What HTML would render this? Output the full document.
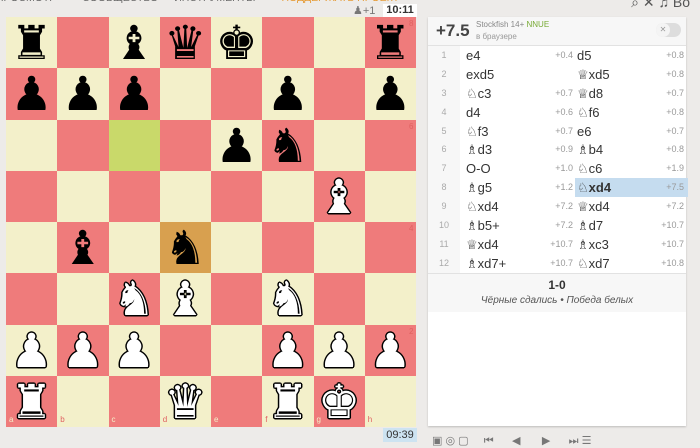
<!DOCTYPE html>
<html><head><meta charset="utf-8"><style>
body{margin:0;width:700px;height:442px;background:#edebe9;font-family:"Liberation Sans","DejaVu Sans",sans-serif;overflow:hidden;position:relative}
.nav{position:absolute;top:-8px;left:-4px;font-size:10.5px;color:#6b6b6b;white-space:nowrap}
.nav span{margin-right:16px}
#board{position:absolute;left:6px;top:17px;width:410px;height:410px}
.sq{position:absolute;width:51.25px;height:51.25px;text-align:center;font-family:"DejaVu Sans",sans-serif;font-size:47px;line-height:54px;color:#000}
.l{background:#f3f0ca}.d{background:#ef7b7b}
.g{background:#c9d96a}.o{background:#d8a04f}
.w{color:#fff;text-shadow:1.5px 0 #000,-1.5px 0 #000,0 1.5px #000,0 -1.5px #000,1px 1px #000,-1px -1px #000,1px -1px #000,-1px 1px #000}
.co{position:absolute;font-size:8px;color:#c44;line-height:8px}
.panel{position:absolute;left:428px;top:17px;width:258px;height:409px;background:#fff;box-shadow:0 1px 2px rgba(0,0,0,.2)}
.hdr{height:28px;background:#f7f7f7;border-bottom:1px solid #e2e2e2;position:relative}
.row{height:18.9px;position:relative;font-size:13px;line-height:19px;color:#333}
.row .n{position:absolute;left:0;width:32px;height:100%;background:#f7f7f7;color:#aaa;font-size:9px;text-align:center}
.mv{position:absolute;top:0;height:100%}
.e{position:absolute;font-size:9px;color:#999;text-align:right}
</style></head><body>
<div class="nav"><span>ПРОСМОТР</span><span style="margin-left:10px">СООБЩЕСТВО</span><span>ИНСТРУМЕНТЫ</span><span style="color:#e69d3a;margin-left:10px">ПОДДЕРЖАТЬ ПРОЕКТ</span></div>
<div style="position:absolute;right:10px;top:-6px;font-size:14px;color:#555">⌕ ✕ ♫ Bo</div>
<div style="position:absolute;left:353px;top:4px;font-size:11px;color:#777">♟+1</div>
<div style="position:absolute;left:383px;top:4px;width:34px;height:13px;background:#fff;font-size:11px;font-weight:bold;text-align:center;line-height:13px;color:#333">10:11</div>
<div id="board"></div>
<div style="position:absolute;left:383px;top:428px;width:34px;height:14px;background:#cde3f1;font-size:11px;text-align:center;line-height:14px;color:#333">09:39</div>
<div class="panel">
<div class="hdr"><span style="position:absolute;left:8px;top:4px;font-size:17px;font-weight:bold;color:#444">+7.5</span>
<span style="position:absolute;left:48px;top:3px;font-size:8px;color:#888">Stockfish 14+ <span style="color:#7a3">NNUE</span></span>
<span style="position:absolute;left:48px;top:15px;font-size:8px;color:#999">в браузере</span>
<span style="position:absolute;left:228px;top:6px;width:25px;height:14px;border-radius:8px;background:#ddd"><span style="position:absolute;left:0;top:0;width:14px;height:14px;border-radius:7px;background:#f4f4f4;font-size:8px;text-align:center;line-height:14px;color:#999">✕</span></span></div>
<div id="moves"></div>
<div style="position:absolute;top:256px;left:0;width:258px;height:38px;background:#f7f7f7;border-top:1px solid #e2e2e2;text-align:center">
<div style="font-size:12px;font-weight:bold;color:#333;margin-top:4px">1-0</div>
<div style="font-size:10px;font-style:italic;color:#555;margin-top:3px">Чёрные сдались • Победа белых</div></div>
</div>
<div style="position:absolute;left:432px;top:434px;font-size:11px;color:#777">▣ ◎ ▢ &nbsp;&nbsp;&nbsp; ⏮ &nbsp;&nbsp;&nbsp;&nbsp; ◀ &nbsp;&nbsp;&nbsp;&nbsp;&nbsp; ▶ &nbsp;&nbsp;&nbsp;&nbsp; ⏭ ☰</div>
<script>
var pcs={"a8":"r","c8":"b","d8":"q","e8":"k","h8":"r","a7":"p","b7":"p","c7":"p","f7":"p","h7":"p","e6":"p","f6":"n","g5":"B","b4":"b","d4":"n","c3":"N","d3":"B","f3":"N","a2":"P","b2":"P","c2":"P","f2":"P","g2":"P","h2":"P","a1":"R","d1":"Q","f1":"R","g1":"K"};
var G={k:"♚",q:"♛",r:"♜",b:"♝",n:"♞",p:"♟"};
var b=document.getElementById('board'),h='',f='abcdefgh',s=51.25;
for(var r=0;r<8;r++)for(var c=0;c<8;c++){var k=f[c]+(8-r),cl=(r+c)%2?'d':'l';if(k=='c6')cl='g';if(k=='d4')cl='o';
var p=pcs[k],t='';if(p){var w=p==p.toUpperCase();t='<span class="'+(w?'w':'')+'">'+G[p.toLowerCase()]+'</span>';}
h+='<div class="sq '+cl+'" style="left:'+c*s+'px;top:'+r*s+'px">'+t+'</div>';}
for(var r=0;r<8;r++)h+='<div class="co" style="left:403px;top:'+(r*s+3)+'px;color:'+(r%2?'#f3f0ca':'#e06060')+'">'+(8-r)+'</div>';
for(var c=0;c<8;c++)h+='<div class="co" style="left:'+(c*s+3)+'px;top:399px;color:'+(c%2?'#e06060':'#f3f0ca')+'">'+f[c]+'</div>';
b.innerHTML=h;
var M=[["e4","+0.4","d5","+0.8"],["exd5","","♕xd5","+0.8"],["♘c3","+0.7","♕d8","+0.7"],["d4","+0.6","♘f6","+0.8"],["♘f3","+0.7","e6","+0.7"],["♗d3","+0.9","♗b4","+0.8"],["O-O","+1.0","♘c6","+1.9"],["♗g5","+1.2","♘xd4","+7.5"],["♘xd4","+7.2","♕xd4","+7.2"],["♗b5+","+7.2","♗d7","+10.7"],["♕xd4","+10.7","♗xc3","+10.7"],["♗xd7+","+10.7","♘xd7","+10.8"]];
var m='';M.forEach(function(x,i){var hl=i==7;
m+='<div class="row"><div class="n">'+(i+1)+'</div><span class="mv" style="left:38px">'+x[0]+'</span><span class="e" style="right:113px">'+x[1]+'</span>'+
'<span class="mv" style="left:147px;width:111px;padding-left:2px;'+(hl?'background:#c5dcef;font-weight:bold;':'')+'">'+x[2]+'</span><span class="e" style="right:2px">'+x[3]+'</span></div>';});
document.getElementById('moves').innerHTML=m;
</script>
</body></html>
